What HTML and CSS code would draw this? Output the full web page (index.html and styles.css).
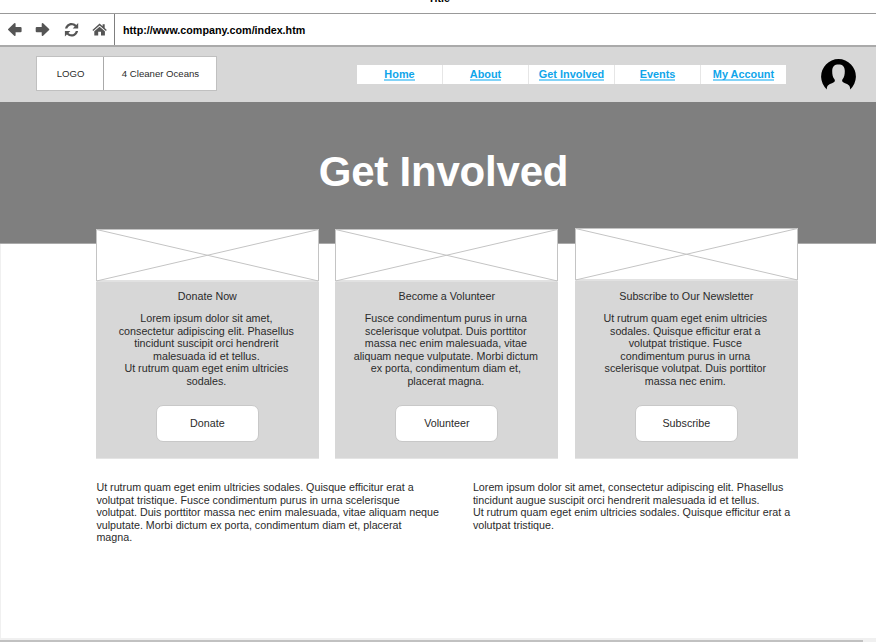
FILE: index.html
```html
<!DOCTYPE html>
<html lang="en">
<head>
<meta charset="utf-8">
<title>Get Involved</title>
<link rel="stylesheet" href="styles.css">
</head>
<body>
<div class="window">
  <div class="titlebar"><span class="title">Title</span></div>
  <div class="toolbar">
    <div class="tools">
      <svg class="tool" viewBox="0 0 16 16"><path d="M1.2 7.1 7.2 1.3Q8.6.5 8.6 2.2V5H13.5Q14.6 5 14.6 6V9.2Q14.6 10.3 13.5 10.3H8.6V13Q8.6 14.7 7.2 13.8L1.2 8.1Q.7 7.6 1.2 7.1Z"/></svg>
      <svg class="tool" viewBox="0 0 16 16"><path d="M14.1 7.1 8.1 1.3Q6.7.5 6.7 2.2V5H1.8Q.7 5 .7 6V9.2Q.7 10.3 1.8 10.3H6.7V13Q6.7 14.7 8.1 13.8L14.1 8.1Q14.6 7.6 14.1 7.1Z"/></svg>
      <svg class="tool" viewBox="0 0 16 16"><path d="M1 6.6C1.7 3.4 4.3 1 7.5 1 9.3 1 11 1.7 12.2 2.9L14.2 1V6.6H8.7L10.7 4.5C9.8 3.6 8.7 3.2 7.5 3.2 5.5 3.2 4 4.5 3.3 6.6ZM14.1 8.9C13.4 12.1 10.8 14.5 7.6 14.5 5.8 14.5 4.1 13.8 2.9 12.6L.9 14.5V8.9H6.4L4.4 11C5.3 11.9 6.4 12.3 7.6 12.3 9.6 12.3 11.1 11 11.8 8.9Z"/></svg>
      <svg class="tool" viewBox="0 0 16 16"><path d="M7.6 1.5 10.6 4.2V2.3H12.7V6.1L14.8 8 13.9 9 7.6 3.4 1.3 9 .4 8ZM7.6 4.7 12.9 9.3V13.5H9V9.8H6.2V13.5H2.3V9.3Z"/></svg>
    </div>
    <div class="address"><span class="url">http://www.company.com/index.htm</span></div>
  </div>
  <header class="header">
    <div class="brand"><div class="logo"><span>LOGO</span></div><div class="tagline"><span>4 Cleaner Oceans</span></div></div>
    <nav class="nav">
      <a href="#"><span>Home</span></a><a href="#"><span>About</span></a><a href="#"><span>Get Involved</span></a><a href="#"><span>Events</span></a><a href="#"><span>My Account</span></a>
    </nav>
    <svg class="avatar" viewBox="0 0 35 34"><path d="M5.8 32.4A17.4 17.4 0 1 1 29.2 32.4C29.2 29 28 27.6 24 26.2 21 25.2 20.8 23.8 21.4 22.4 23.3 20.5 23.8 17.6 23.8 14 23.8 9.4 21.4 7.5 17.5 7.5S11.2 9.4 11.2 14C11.2 17.6 11.7 20.5 13.6 22.4 14.2 23.8 14 25.2 11 26.2 7 27.6 5.8 29 5.8 32.4Z"/></svg>
  </header>
  <section class="hero"><h1>Get Involved</h1></section>
  <main class="page">
    <div class="cards">
      <article class="card">
        <svg class="picture" viewBox="0 0 223 53"><path d="M.5.5H222.5V52H.5ZM.5.5 222.5 52M222.5.5.5 52"/></svg>
        <h2>Donate Now</h2>
        <p>Lorem ipsum dolor sit amet,<br>consectetur adipiscing elit. Phasellus<br>tincidunt suscipit orci hendrerit<br>malesuada id et tellus.<br>Ut rutrum quam eget enim ultricies<br>sodales.</p>
        <button>Donate</button>
      </article>
      <article class="card">
        <svg class="picture" viewBox="0 0 223 53"><path d="M.5.5H222.5V52H.5ZM.5.5 222.5 52M222.5.5.5 52"/></svg>
        <h2>Become a Volunteer</h2>
        <p>Fusce condimentum purus in urna<br>scelerisque volutpat. Duis porttitor<br>massa nec enim malesuada, vitae<br>aliquam neque vulputate. Morbi dictum<br>ex porta, condimentum diam et,<br>placerat magna.</p>
        <button>Volunteer</button>
      </article>
      <article class="card raised">
        <svg class="picture" viewBox="0 0 223 53"><path d="M.5.5H222.5V52H.5ZM.5.5 222.5 52M222.5.5.5 52"/></svg>
        <h2>Subscribe to Our Newsletter</h2>
        <p>Ut rutrum quam eget enim ultricies<br>sodales. Quisque efficitur erat a<br>volutpat tristique. Fusce<br>condimentum purus in urna<br>scelerisque volutpat. Duis porttitor<br>massa nec enim.</p>
        <button>Subscribe</button>
      </article>
    </div>
    <div class="columns">
      <p>Ut rutrum quam eget enim ultricies sodales. Quisque efficitur erat a<br>volutpat tristique. Fusce condimentum purus in urna scelerisque<br>volutpat. Duis porttitor massa nec enim malesuada, vitae aliquam neque<br>vulputate. Morbi dictum ex porta, condimentum diam et, placerat<br>magna.</p>
      <p>Lorem ipsum dolor sit amet, consectetur adipiscing elit. Phasellus<br>tincidunt augue suscipit orci hendrerit malesuada id et tellus.<br>Ut rutrum quam eget enim ultricies sodales. Quisque efficitur erat a<br>volutpat tristique.</p>
    </div>
  </main>
  <div class="scrollbar"><div class="thumb"></div></div>
</div>
</body>
</html>
```
FILE: styles.css
```css
* { box-sizing: border-box; }
body { margin: 0; background: #fff; color: #2b2b2b; font: 10.72px/12.5px "Liberation Sans", Arial, sans-serif; }
h1, h2, p { margin: 0; font-weight: normal; }
.window { width: 876px; height: 642px; overflow: hidden; display: flex; flex-direction: column; }
.titlebar { flex: none; height: 13px; overflow: hidden; display: flex; justify-content: center; }
.title { margin-top: -8px; font-weight: bold; font-size: 10.67px; color: #000; padding-left: 2px; }
.toolbar { flex: none; height: 34px; display: flex; border-top: 1px solid #999; border-bottom: 2px solid #aaa; }
.tools { width: 115px; border-right: 1px solid #7f7f7f; display: flex; align-items: center; gap: 12.5px; padding: 1px 0 0 6.5px; }
.tool { width: 16px; height: 16px; flex: none; fill: #555; }
.address { display: flex; align-items: center; padding: 2px 0 0 8px; color: #000; font-weight: bold; font-size: 10.72px; }
.header { flex: none; height: 55px; background: #d7d7d7; display: flex; align-items: flex-start; }
.brand { margin: 9px 0 0 36px; width: 181px; height: 35px; display: flex; background: #fff; border: 1px solid #c0c0c0; font-size: 9.6px; }
.logo, .tagline { display: flex; align-items: center; justify-content: center; padding-top: 1px; }
.logo { width: 67px; border-right: 1px solid #aaa; padding-left: 1px; }
.tagline { flex: 1; padding-left: 1px; }
.nav { margin: 18px 0 0 140px; width: 429px; height: 19px; background: #fff; display: flex; }
.nav a { flex: 1; display: flex; justify-content: center; align-items: flex-start; color: #0fa5ea; text-decoration: none; font-weight: bold; font-size: 10.9px; }
.nav a + a { border-left: 1px solid #e6e6e6; }
.nav span { height: 16px; line-height: 18px; border-bottom: 2px solid #81d3f8; }
.avatar { width: 35px; height: 34px; margin: 10px 0 0 35px; }
.hero { flex: none; height: 142px; background: #7f7f7f; border-bottom: 1px solid #aaa; padding: 46px 0 0 11px; text-align: center; }
h1 { font-weight: bold; font-size: 42px; line-height: 48px; letter-spacing: -.2px; color: #fff; }
.page { flex: 1; border-left: 1px solid #f0f0f0; padding-left: 95px; }
.cards { display: flex; gap: 16.8px; margin-top: -15px; }
.card { width: 222.7px; height: 230px; background: #d7d7d7; border-bottom: 1px solid #e4e4e4; text-align: center; }
.picture { display: block; width: 223px; height: 53px; background: #fff; fill: none; stroke: #c4c4c4; }
.raised .picture { margin-top: -1px; }
.card h2 { font-size: inherit; line-height: 13px; padding-top: 8px; }
.raised h2 { padding-top: 9px; }
.card p { margin-top: 9px; padding-right: 2px; }
button { display: block; width: 103px; height: 37px; margin: 18px auto 0; padding: 0; border: 1px solid #c8c8c8; border-radius: 7px; background: #fff; font: inherit; color: #2b2b2b; }
.columns { display: flex; margin-top: 22px; padding-left: .4px; }
.columns p { width: 376.5px; flex: none; }
.scrollbar { flex: none; height: 4px; background: #f0f0f0; padding-top: 2px; }
.thumb { width: 863px; height: 2px; background: #c1c1c1; }
```
